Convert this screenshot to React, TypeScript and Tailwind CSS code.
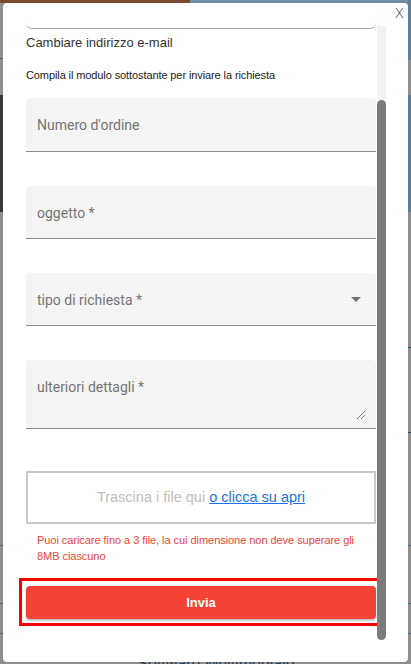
import React from "react";

function Field({ label, h, children }: { label: string; h: string; children?: React.ReactNode }) {
  return (
    <div className={`relative w-full ${h} bg-[#f4f4f4] rounded-t-[4px] border-b border-[#8c8c8c]`}>
      <div className="absolute left-[11px] top-[18px] text-[14px] leading-[18px] text-[#767676] font-['Roboto',sans-serif]">
        {label}
      </div>
      {children}
    </div>
  );
}

export default function App() {
  return (
    <div className="relative w-[411px] h-[664px] overflow-hidden bg-[#8e8e8e] font-['Liberation_Sans',Arial,sans-serif]">
      {/* background page under overlay */}
      <div className="absolute left-0 top-0 w-[190px] h-[3px] bg-[#7a4a2a]" />
      <div className="absolute left-[190px] top-0 w-[221px] h-[3px] bg-[#6f8ea6]" />
      <div className="absolute right-0 top-0 w-[3px] h-[60px] bg-[#5f7f98]" />
      <div className="absolute right-0 top-[95px] w-[3px] h-[117px] bg-[#5b7d96]" />
      <div className="absolute left-0 top-[95px] w-[3px] h-[117px] bg-[#3a3a3a]" />
      <div className="absolute left-0 top-[58px] w-[3px] h-[1px] bg-[#5b5b5b]" />
      <div className="absolute right-0 top-[347px] w-[3px] h-[1px] bg-[#2a4a6a]" />
      <div className="absolute right-0 top-[432px] w-[3px] h-[1px] bg-[#2a4a6a]" />
      <div className="absolute left-0 top-[545px] w-[411px] h-[1px] bg-[#4a6a8a]" />
      <div className="absolute left-0 top-[603px] w-[411px] h-[1px] bg-[#4a6a8a]" />
      <div className="absolute left-0 top-[633px] w-[411px] h-[1px] bg-[#4a6a8a]" />
      <div className="absolute left-[126px] top-[654px] w-[180px] text-center text-[16px] leading-[20px] text-[#2a3a5a]">
        Software Multimediale
      </div>

      {/* modal */}
      <div className="absolute left-[3px] top-[3px] w-[405px] h-[659px] bg-white rounded-[4px] overflow-hidden">
        <button className="absolute right-[4px] top-[1px] text-[14px] leading-[18px] text-[#333] font-['DejaVu_Sans',sans-serif] font-light">
          X
        </button>

        <div className="flex">
          {/* content */}
          <div className="ml-[23px] w-[350px] flex flex-col">
            <div className="h-[26px] rounded-b-[6px] border-b border-[#a8a8a8]" />
            <div className="mt-[4px] text-[13px] leading-[20px] text-[#333]">Cambiare indirizzo e-mail</div>
            <div className="mt-[15px] text-[11px] leading-[14px] text-[#222] tracking-[-0.1px]">
              Compila il modulo sottostante per inviare la richiesta
            </div>

            <div className="mt-[16px]">
              <Field label="Numero d'ordine" h="h-[54px]" />
            </div>
            <div className="mt-[34px]">
              <Field label="oggetto *" h="h-[53px]" />
            </div>
            <div className="mt-[34px]">
              <Field label="tipo di richiesta *" h="h-[53px]">
                <svg className="absolute right-[15px] top-[24px]" width="10" height="5" viewBox="0 0 10 5">
                  <polygon points="0,0 10,0 5,5" fill="#6f6f6f" />
                </svg>
              </Field>
            </div>
            <div className="mt-[34px]">
              <Field label="ulteriori dettagli *" h="h-[69px]">
                <svg className="absolute right-[11px] bottom-[9px]" width="8" height="8" viewBox="0 0 8 8">
                  <line x1="0" y1="8" x2="8" y2="0" stroke="#777" strokeWidth="1" />
                  <line x1="4" y1="8" x2="8" y2="4" stroke="#777" strokeWidth="1" />
                </svg>
              </Field>
            </div>

            <div className="mt-[42px] h-[53px] border-2 border-[#c8c8c8] flex items-center justify-center text-[14.5px]">
              <span className="text-[#bdbdbd]">Trascina i file qui&nbsp;</span>
              <span className="text-[#1a73e8] underline">o clicca su apri</span>
            </div>

            <div className="mt-[8px] pl-[11px] pr-[14px] text-[11px] leading-[16px] text-[#f44336] tracking-[-0.05px]">
              Puoi caricare fino a 3 file, la cui dimensione non deve superare gli 8MB ciascuno
            </div>

            <div className="mt-[14px] -mx-[7px] border-[3px] border-[#ff0000] px-[4px] pt-[5px] pb-[4px]">
              <button className="w-full h-[33px] bg-[#f44336] rounded-[4px] text-white font-bold text-[13px] shadow-[0_2px_2px_rgba(0,0,0,0.25)]">
                Invia
              </button>
            </div>
          </div>

          {/* scrollbar */}
          <div className="ml-[1px] w-[9px] flex flex-col">
            <div className="mt-[23px] h-[74px] bg-[#f2f2f2]" />
            <div className="h-[540px] bg-[#7b7b7b] rounded-[5px]" />
          </div>
        </div>
      </div>
    </div>
  );
}
